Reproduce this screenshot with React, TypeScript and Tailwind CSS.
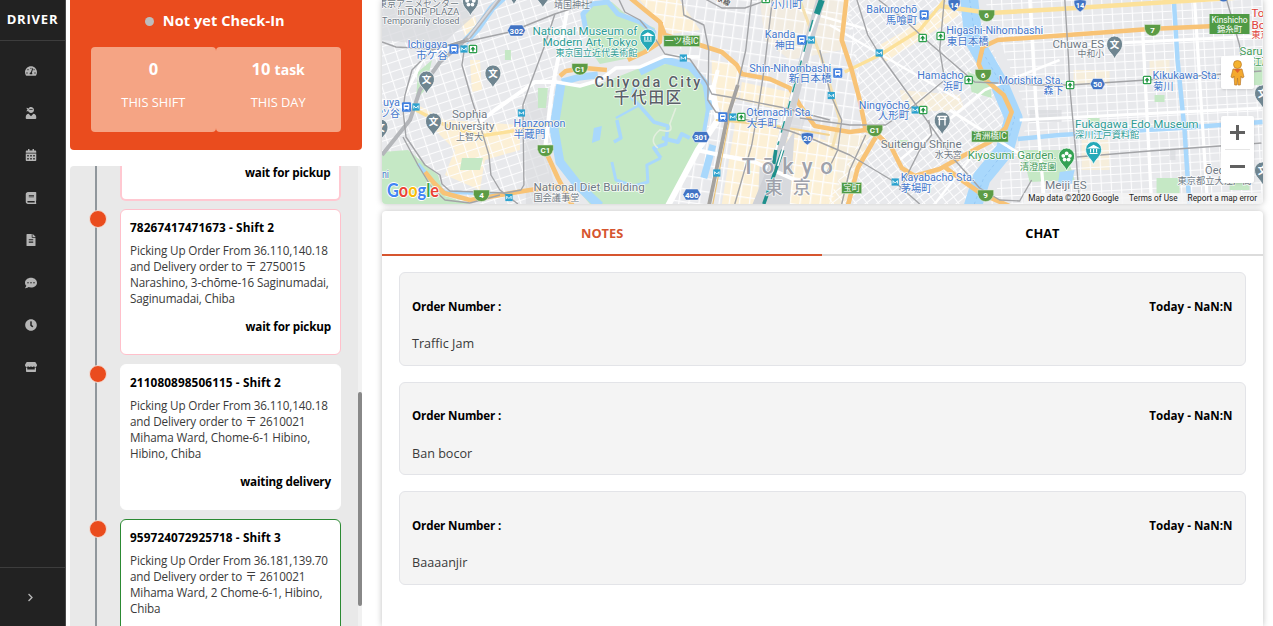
import React from "react";
import {
  FaTachometerAlt,
  FaUserNinja,
  FaCalendarAlt,
  FaBook,
  FaFileAlt,
  FaCommentDots,
  FaClock,
  FaStore,
  FaChevronRight,
} from "react-icons/fa";

const BLUE = "#4478cc";
const TEAL = "#2f9c96";
const GRAY = "#707a85";
const GREEN = "#439c5a";

type LabelRow = [text: string, x: number, baseline: number, width: number, size: number, color: string];

const labels: LabelRow[] = [
  ["東京アニメセンター", 378, 7, 81, 9.5, GRAY],
  ["in DNP PLAZA", 397.5, 15.5, 62, 9.5, GRAY],
  ["Temporarily closed", 382, 24.5, 77.5, 9.5, GRAY],
  ["Ichigaya", 407.5, 48.5, 40, 10.5, BLUE],
  ["市ケ谷", 416, 59, 32, 10.5, BLUE],
  ["靖国神社", 554, 8, 36, 9.5, GRAY],
  ["National Museum of", 532.5, 35, 105, 11, TEAL],
  ["Modern Art, Tokyo", 542.5, 46.5, 95, 11, TEAL],
  ["東京国立近代美術館", 555.5, 56.5, 82, 9.2, TEAL],
  ["Sophia", 452, 118.5, 35.5, 10.5, GRAY],
  ["University", 444, 130.5, 50.5, 10.5, GRAY],
  ["上智大", 456, 140, 27, 9.2, GRAY],
  ["Hanzomon", 513.5, 127.5, 52, 10.5, BLUE],
  ["半蔵門", 513.5, 138.5, 32, 10.5, BLUE],
  ["uya", 383, 106, 17, 10.5, BLUE],
  ["ツ谷", 380, 117, 20, 10.5, BLUE],
  ["ni", 382, 178, 7, 10.5, BLUE],
  ["National Diet Building", 533.5, 191.5, 111.5, 10.5, GRAY],
  ["国会議事堂", 533.5, 201.5, 46, 9.2, GRAY],
  ["小川町", 771, 8, 32, 10.5, BLUE],
  ["Kanda", 765, 38.5, 30.5, 10.5, BLUE],
  ["神田", 775, 49, 20, 10.5, BLUE],
  ["Shin-Nihombashi", 749.5, 72, 82, 10.5, BLUE],
  ["新日本橋", 789, 82.5, 43, 10.5, BLUE],
  ["Otemachi Sta.", 746.5, 116, 67, 10.5, BLUE],
  ["大手町", 747, 127, 31, 10.5, BLUE],
  ["Bakurochō", 866.5, 13, 51, 10.5, BLUE],
  ["馬喰町", 886, 24, 31.5, 10.5, BLUE],
  ["Higashi-Nihombashi", 946.5, 34, 97, 10.5, BLUE],
  ["東日本橋", 947, 45, 42, 10.5, BLUE],
  ["Hamacho", 917.5, 79.5, 46.5, 10.5, BLUE],
  ["浜町", 943, 90, 20.5, 10.5, BLUE],
  ["Morishita Sta.", 999, 84, 64.5, 10.5, BLUE],
  ["森下", 1044, 94.5, 20, 10.5, BLUE],
  ["Ningyōchō", 859, 109, 51, 10.5, BLUE],
  ["人形町", 878, 119.5, 31.5, 10.5, BLUE],
  ["Suitengu Shrine", 881, 148, 81, 10.5, GRAY],
  ["水天宮", 935, 158, 27, 9.2, GRAY],
  ["Kiyosumi Garden.", 968, 159.5, 89, 10.5, GREEN],
  ["清澄庭園", 1020, 170, 37, 9.2, GREEN],
  ["Kayabachō Sta.", 901, 181, 74, 10.5, BLUE],
  ["茅場町", 901, 192, 31, 10.5, BLUE],
  ["Chuwa ES", 1053, 48, 51.5, 10.5, GRAY],
  ["中和小", 1078, 57.5, 26.5, 9.2, GRAY],
  ["Kikukawa Sta.", 1153, 79, 67, 10.5, BLUE],
  ["菊川", 1153.5, 90, 20.5, 10.5, BLUE],
  ["Fukagawa Edo Museum", 1075.5, 128.5, 123.5, 11, TEAL],
  ["深川江戸資料館", 1075.5, 138.5, 64, 9.2, TEAL],
  ["Meiji ES", 1045.5, 189, 41.5, 10.5, GRAY],
  ["Ōedo", 1205.5, 174.5, 26, 10.5, GRAY],
  ["東京都立大江戸高", 1178, 184, 74, 9.2, GRAY],
  ["To", 1252, 17, 13, 11, "#e0413b"],
  ["Bo", 1252, 29, 14, 11, "#e0413b"],
  ["東京", 1252, 38.5, 18, 9.2, "#e0413b"],
  ["Saru", 1240, 55, 23, 11, GREEN],
  ["江戸", 1253, 65, 18, 9.2, GREEN],
];

function MapLabels() {
  return (
    <g
      fontFamily='Roboto, "Noto Sans CJK JP", sans-serif'
      stroke="#ffffff"
      strokeOpacity="0.85"
      strokeWidth="1.6"
      strokeLinejoin="round"
      paintOrder="stroke"
    >
      {labels.map(([text, x, y, w, size, color]) => (
        <text key={text + x} x={x} y={y} fontSize={size} fill={color} textLength={w} lengthAdjust="spacingAndGlyphs">
          {text}
        </text>
      ))}
      <g fontWeight="500">
        <text x="594.5" y="87.5" fontSize="14.5" fill="#5a6068" textLength="106">Chiyoda City</text>
        <text x="614" y="103" fontSize="15.5" fill="#5a6068" textLength="67.5">千代田区</text>
        <text x="742" y="174.5" fontSize="22" fill="#9fa2ab" textLength="91">Tōkyo</text>
        <text x="765" y="194" fontSize="18" fill="#9fa2ab" textLength="46">東京</text>
        <text x="711" y="-3" fontSize="7" fill="#444" transform="rotate(28 711 -3)" textLength="20">環状線</text>
      </g>
    </g>
  );
}

function Tag({ x, y, w, h = 11, children }: { x: number; y: number; w: number; h?: number; children: string }) {
  return (
    <g>
      <rect x={x} y={y} width={w} height={h} fill="#4f9a45" stroke="#cfe5c9" strokeWidth="0.6" />
      <text x={x + w / 2} y={y + h - 2.6} fontSize="8.6" fill="#fff" textAnchor="middle">{children}</text>
    </g>
  );
}

function Hex({ x, y, children }: { x: number; y: number; children: string }) {
  const w = children.length > 2 ? 9 : 7.5;
  return (
    <g transform={`translate(${x} ${y})`}>
      <path d={`M${-w} 0 L${-w + 3} -5.5 H${w - 3} L${w} 0 L${w - 3} 5.5 H${-w + 3}Z`} fill="#4173c4" stroke="#fff" strokeWidth="0.5" />
      <text y="3" fontSize="8" fontWeight="700" fill="#fff" textAnchor="middle">{children}</text>
    </g>
  );
}

function Shield({ x, y, children }: { x: number; y: number; children: string }) {
  return (
    <g transform={`translate(${x} ${y})`}>
      <path d="M-6 -5 Q0 -7 6 -5 Q7 2 0 6.5 Q-7 2 -6 -5Z" fill="#4173c4" stroke="#fff" strokeWidth="0.5" />
      <text y="2.5" fontSize="7.5" fontWeight="700" fill="#fff" textAnchor="middle">{children}</text>
    </g>
  );
}

function Express({ x, y, children }: { x: number; y: number; children: string }) {
  return (
    <g transform={`translate(${x} ${y})`}>
      <path d="M-8 -5.5 H8 V-1 Q6 6 0 6 Q-6 6 -8 -1Z" fill="#5c9b45" stroke="#e6f0e0" strokeWidth="0.5" />
      <text y="2.8" fontSize="8" fontWeight="700" fill="#fff" textAnchor="middle">{children}</text>
    </g>
  );
}

function Pin({ x, y, color = "#6f8590", kind = "school" }: { x: number; y: number; color?: string; kind?: "school" | "museum" | "shrine" | "flower" }) {
  return (
    <g transform={`translate(${x} ${y})`}>
      <path d="M0 14 C-2 8 -8 6 -8 -1 A8 8 0 0 1 8 -1 C8 6 2 8 0 14Z" fill={color} stroke="#fff" strokeWidth="0.8" />
      {kind === "school" && <text y="2.8" fontSize="9.5" fontWeight="700" fill="#fff" textAnchor="middle">文</text>}
      {kind === "museum" && <path d="M-4.5 -2.5 L0 -5 L4.5 -2.5Z M-4 3 H4 M-3 -1.5 V2 M0 -1.5 V2 M3 -1.5 V2" fill="#fff" stroke="#fff" strokeWidth="1.1" />}
      {kind === "shrine" && <path d="M-5 -4.5 H5 M-4 -1.8 H4 M-2.8 -4 V4.5 M2.8 -4 V4.5" stroke="#fff" strokeWidth="1.4" />}
      {kind === "flower" && (
        <g fill="#fff">
          <circle cx="0" cy="-3.6" r="1.9" /><circle cx="3.3" cy="-1.2" r="1.9" /><circle cx="2" cy="2.6" r="1.9" />
          <circle cx="-2" cy="2.6" r="1.9" /><circle cx="-3.3" cy="-1.2" r="1.9" /><circle cx="0" cy="0" r="1" fill={color} />
        </g>
      )}
    </g>
  );
}

const trains = [[454, 49], [406.5, 107], [723, 117], [802, 40], [924.5, 15], [838, 73]];
const metros = [[464, 49], [416, 107], [521.5, 113], [509, 197.5], [683.5, 58], [733, 117], [717, 173], [811.5, 40], [879.5, 53], [831.5, 95.5], [915.5, 110], [895.5, 182]];
const toei = [[473, 49], [741.5, 117], [766, -1], [923, 38], [941, 36], [923.5, 110], [969, 80], [1070.5, 85], [1147.5, 80]];

const greys = [
  "M382 42 L396 47 L432 49 L460 43 L510 32 L555 14 L592 2",
  "M555 14 L545 45 L530 85 L523 105 L524 185 L521 190 L505 193 L450 191 L442 184 L440 175 L425 165 L406 137 L403 110 L405 95 L412 70 L432 50 L465 40",
  "M465 45 L462 65 L472 100 L480 125 L489 155 L491 175 L500 190 L518 204",
  "M403 137 L418 165 L432 188 L445 200 L470 203 L500 195",
  "M617 -5 L625 12 L640 20 L655 38 L665 54 L690 59 L706 82 L712 94 L735 98 L785 108 L830 120",
  "M682 -4 L684 15 L704 25 L709 50 L708 100 L716 112 L740 118 L790 131 L815 140 L850 155 L895 182 L920 204",
  "M700 -4 L722 8 L745 8 L768 0",
  "M752 -4 L746 50 L738 85 L727 120",
  "M773 -4 L765 65 L759 105 L752 145 L735 204",
  "M856 -4 L868 35 L879 53 L915 103 L955 160 L980 188 L1000 200 L1020 201 L1032 180",
  "M879 0 L905 20 L924 38 L975 82 L1040 85 L1070 85 L1147 80 L1262 71",
  "M945 -4 L940 50 L945 80 L915 105 L886 125 L850 125 L800 118",
  "M1065 -4 L1069 60 L1070 85 L1076 150 L1080 204",
  "M929 120 L932 135 L920 150 L900 190",
  "M820 50 L831 95 L842 120 L838 150 L826 175",
  "M866 135 L850 170 L842 204",
  "M1077 157 L1150 151 L1262 143",
  "M1226 -4 L1240 45 L1242 60",
];

const highways = [
  "M628 -4 L645 10 L660 22 L665 35 L700 45 L722 52 L737 65 L742 74 L770 79 L790 88 L800 105 L815 126 L832 129 L850 132 L866 130 L878 135 L892 148 L902 168 L915 176 L940 169 L965 155 L990 142 L1006 128 L1012 112 L1004 95 L986 80 L979 64 L983 47 L998 40 L1040 37 L1110 32 L1150 29 L1216 26",
  "M661 22 L660 42 L645 52 L628 60",
  "M607 70 L585 68 L566 71 L560 76",
  "M847 -4 L842 40 L852 70 L860 100 L866 130",
  "M876 137 L858 168 L848 206",
  "M945 167 L962 180 L982 194 L1010 206",
  "M548 156 L558 178 L574 208",
  "M425 172 L434 183 L444 193 L470 200 L530 190 L560 186",
];

function CityMap() {
  return (
    <svg className="block h-[204px] w-full" viewBox="382 0 881 204" preserveAspectRatio="none">
      <defs>
        <pattern id="gridA" width="12" height="9" patternUnits="userSpaceOnUse" patternTransform="rotate(-18)">
          <path d="M0 0 H12 M0 0 V9" stroke="#fdfdfe" strokeWidth="2.2" />
        </pattern>
        <pattern id="gridB" width="10" height="13" patternUnits="userSpaceOnUse" patternTransform="rotate(8)">
          <path d="M0 0 H10 M0 0 V13" stroke="#fdfdfe" strokeWidth="2.6" />
        </pattern>
        <pattern id="gridC" width="9" height="7" patternUnits="userSpaceOnUse" patternTransform="rotate(-38)">
          <path d="M0 0 H9 M0 0 V7" stroke="#fdfdfe" strokeWidth="2" />
        </pattern>
        <pattern id="gridD" width="10" height="8" patternUnits="userSpaceOnUse" patternTransform="rotate(-3)">
          <path d="M0 0 H10 M0 0 V8" stroke="#fdfdfe" strokeWidth="2.2" />
        </pattern>
      </defs>

      <rect x="382" y="0" width="881" height="204" fill="#e8e9ec" />

      <g fill="#fcf0d6">
        <path d="M418 105 L445 120 L520 125 L520 150 L485 160 L480 190 L445 175 L455 150 L430 125Z" />
        <path d="M712 60 L738 65 L740 95 L725 115 L770 122 L840 145 L835 204 L722 204 L735 125 L712 100Z" />
        <path d="M640 0 L680 0 L700 30 L670 34Z" />
        <path d="M742 82 L790 92 L800 115 L740 100Z" />
        <path d="M760 0 H850 L842 50 L790 60 L765 40Z" opacity="0.5" />
        <path d="M880 45 L950 5 L960 15 L885 62Z" />
        <path d="M470 60 H480 L482 90 L472 92Z M460 20 L475 15 L478 32 L465 36Z" />
        <path d="M826 130 L870 135 L845 204 H826Z" opacity="0.7" />
        <path d="M900 90 L960 95 L965 110 L905 112Z" opacity="0.7" />
        <path d="M1074 70 H1110 V85 H1074Z M1082 140 H1110 V170 H1082Z M1150 60 H1170 V75 H1150Z" opacity="0.7" />
      </g>

      <path d="M382 0 H610 L560 80 L545 204 H382Z" fill="url(#gridA)" />
      <path d="M640 0 H850 L866 130 L830 204 H650 L715 90Z" fill="url(#gridB)" />
      <path d="M845 0 H975 L1018 115 L975 204 H826 L866 130Z" fill="url(#gridC)" />
      <path d="M985 0 H1263 V204 H990 L1030 120Z" fill="url(#gridD)" />

      <g fill="#d8dade">
        <path d="M382 0 H460 L475 15 L440 46 L382 40Z" opacity="0.75" />
        <path d="M525 95 L550 90 L545 150 L560 204 H526Z" opacity="0.6" />
        <path d="M760 165 L775 160 L795 130 L790 204 H758Z" />
        <path d="M1030 110 H1062 V122 H1030Z M1170 150 H1176 V160 H1170Z M785 115 L805 120 L802 130 L783 126Z" opacity="0.7" />
      </g>

      <g fill="#c5e8c5">
        <path d="M382 152 L408 150 L438 175 L445 196 L470 204 H382Z" />
        <path d="M462 158 H483 L480 170 H460Z M505 50 H511 V60 H505Z M538 88 H548 L546 108 H538Z" />
        <path d="M584 4 L612 2 L630 18 L655 28 L656 45 L640 56 L600 64 L590 50Z" />
        <path d="M560 84 L600 84 L640 68 L680 62 L700 72 L712 100 L703 140 L667 204 H590 L565 175 L553 130 L559 95Z" />
        <path d="M968 72 L990 80 L992 98 L972 92Z M1022 150 H1066 L1075 180 L1030 182Z M1157 178 H1180 V194 H1157Z" />
        <path d="M898 140 H908 V148 H898Z M1240 60 H1263 V85 H1240Z M1088 118 H1100 V124 H1088Z M1155 95 H1165 V102 H1155Z M1230 170 H1250 V190 H1230Z" />
        <path d="M418 72 L432 60 L425 90 L416 100Z" />
      </g>

      <g fill="none" stroke="#a9d8fc" strokeLinejoin="round">
        <path d="M505 -4 L492 8 L478 28 L465 42" strokeWidth="7" />
        <path d="M418 164 L434 183 L445 192 L500 194" strokeWidth="3.5" />
        <path d="M586 30 L583 14 L592 4 L608 2 L618 14 L640 22 L654 32 L653 44" strokeWidth="5" />
        <path d="M562 82 L580 77 L598 75" strokeWidth="7" />
        <path d="M561 84 L554 128 L560 162 L578 185 L600 206" strokeWidth="9" />
        <path d="M640 72 L665 60 L690 66 L706 84 L711 110" strokeWidth="7" />
        <path d="M662 138 L678 142 L682 134 L690 138" strokeWidth="4" />
        <path d="M636 84 L632 98 L640 106 L654 122 L668 126 L666 144 L654 148 L661 158" strokeWidth="3.5" />
        <path d="M638 106 L616 118" strokeWidth="2.2" />
        <path d="M617 120 L621 138 L614 142" strokeWidth="3.5" />
        <path d="M661 158 L647 165 L648 182 L634 186 L616 180 L612 162" strokeWidth="3" />
        <path d="M713 145 L704 178" strokeWidth="7" />
        <path d="M706 90 L708 110 L701 150" strokeWidth="4" />
        <path d="M969 -5 L974 40 L1000 85 L1014 118 L1005 150 L982 178 L972 210" strokeWidth="18" />
        <path d="M1018 139 L1060 135 L1180 128 L1263 122" strokeWidth="4.5" />
        <path d="M1174 -4 L1178 60 L1185 130 L1190 208" strokeWidth="4.5" />
      </g>
      <path d="M594 128 L602 126 L600 140 L592 143Z M1060 172 L1075 170 L1072 184 L1058 186Z" fill="#a9d8fc" />
      <path d="M970 0 L976 40 L1002 85 L1015 118 L1006 150 L984 178 L974 206" fill="none" stroke="#8cc1f0" strokeWidth="0.7" strokeDasharray="3 3" />

      <g fill="none" stroke="#fff" strokeLinejoin="round">
        <path d="M556 82 L580 86 L600 80 L616 68 L640 67 L665 56 L700 57" strokeWidth="3.5" />
        <path d="M569 0 L562 40 L552 90 L545 150" strokeWidth="4" />
        <path d="M697 150 L720 155 L755 162 L800 182" strokeWidth="4" />
        <path d="M712 85 L718 120 L698 150 L668 206" strokeWidth="6" />
        <path d="M710 100 L718 70" strokeWidth="4" />
        <path d="M382 100 L405 108 M405 95 L425 55 L470 40" strokeWidth="3" />
        <path d="M470 130 L495 110 L535 82 L556 82" strokeWidth="4" />
        <path d="M1030 -2 L1036 100 L1045 204 M1195 0 L1208 204 M1143 30 L1152 204 M1020 120 L1262 108 M1075 45 L1262 36" strokeWidth="3.2" />
        <path d="M900 160 L985 90 L1060 60" strokeWidth="2.6" />
        <path d="M935 204 L985 140 M830 25 L960 100 M800 10 L870 30" strokeWidth="2.4" />
        <path d="M950 110 L1030 160" strokeWidth="3" />
      </g>
      <path d="M676 108 L670 124 Q675 134 660 130 Q648 140 658 148" fill="none" stroke="#e3efdf" strokeWidth="1.6" />

      <g fill="none" stroke="#fce19a" strokeLinejoin="round">
        <path d="M416 110 L445 125 L480 136 L520 130 L556 122" strokeWidth="3.5" />
        <path d="M940 6 L990 13 L1060 9 L1263 -4" strokeWidth="4.5" />
        <path d="M845 72 L880 55 L920 30 L945 0" strokeWidth="3.5" />
        <path d="M716 120 L770 125 L830 135" strokeWidth="2.2" stroke="#f3d391" />
        <path d="M800 0 L826 70 L840 120 L832 150" strokeWidth="3" stroke="#f5e1b2" />
        <path d="M545 150 L556 174 L572 206" strokeWidth="4" />
      </g>

      <g fill="none" stroke="#f8c376" strokeWidth="4.6" strokeLinejoin="round">
        {highways.map((d) => <path key={d} d={d} />)}
      </g>

      <g fill="none" strokeLinejoin="round">
        <path d="M502 -4 L487 14 L470 36 L440 62 L420 90 L410 120 L382 155" stroke="#b4b6ba" strokeWidth="4" />
        <path d="M500 -4 L485 16 L468 38" stroke="#d9dadf" strokeWidth="2" />
        <path d="M822 -4 L808 45 L795 95 L778 155 L756 208" stroke="#cfd1d6" strokeWidth="9" />
        <path d="M824 -4 L806 45 L792 95 L776 150" stroke="#fff" strokeWidth="2.2" />
        <path d="M822 0 L817 14" stroke="#1f908c" strokeWidth="6" />
        <path d="M813 20 L792 95 L778 145" stroke="#2b9a95" strokeWidth="1.5" strokeDasharray="12 9" />
        <path d="M776 150 L774 164 M783 150 L764 204" stroke="#1f908c" strokeWidth="3.5" />
        <path d="M784 146 L778 166" stroke="#fff" strokeWidth="1.6" />
        <path d="M738 85 L727 120 L709 206" stroke="#a5a29e" strokeWidth="3.8" />
        <path d="M713 204 L731 112" stroke="#ebc47a" strokeWidth="1.2" />
      </g>
      <g fill="none" stroke="#a3a4a7" strokeWidth="1.4" strokeLinejoin="round">
        {greys.map((d) => <path key={d} d={d} />)}
      </g>

      <g fontFamily='Roboto, "Noto Sans CJK JP", sans-serif'>
        {trains.map(([x, y]) => (
          <g key={`${x}-${y}`} transform={`translate(${x} ${y})`}>
            <rect x="-4.5" y="-4.8" width="9" height="9.6" rx="1" fill="#3f7fe0" />
            <rect x="-2.8" y="-3" width="5.6" height="5" rx="0.8" fill="#fff" />
            <path d="M-1.8 -1.4 H1.8 V0 H-1.8Z" fill="#3f7fe0" />
            <path d="M-2.5 3.4 L-1.2 2 M2.5 3.4 L1.2 2" stroke="#fff" strokeWidth="0.8" />
          </g>
        ))}
        {metros.map(([x, y]) => (
          <g key={`${x}-${y}`} transform={`translate(${x} ${y})`}>
            <rect x="-3.6" y="-3.6" width="7.2" height="7.2" fill="#2da3cf" />
            <path d="M-2.2 1.5 V-1.3 L0 1 L2.2 -1.3 V1.5" fill="none" stroke="#fff" strokeWidth="0.9" />
          </g>
        ))}
        {toei.map(([x, y]) => (
          <g key={`${x}-${y}`} transform={`translate(${x} ${y})`}>
            <rect x="-3.7" y="-3.7" width="7.4" height="7.4" rx="1" fill="#fff" stroke="#2ea04d" strokeWidth="1.2" />
            <path d="M0 -2.6 L2.6 0.5 H0.8 V2.4 H-0.8 V0.5 H-2.6Z" fill="#1e9440" />
          </g>
        ))}
        <Hex x={516.5} y={30.5}>302</Hex>
        <Hex x={701} y={137}>301</Hex>
        <Hex x={692} y={194.5}>406</Hex>
        <Hex x={1098} y={84}>50</Hex>
        <Shield x={807.5} y={138.5}>20</Shield>
        <Shield x={954.5} y={5}>14</Shield>
        <Shield x={1080.5} y={5.5}>14</Shield>
        <path d="M1220 0 H1228 Q1224 3 1220 0Z" fill="#4173c4" />
        <Express x={580} y={69}>C1</Express>
        <Express x={545.5} y={150.5}>C1</Express>
        <Express x={481.5} y={195.5}>4</Express>
        <Express x={987} y={15.5}>6</Express>
        <Express x={983.5} y={75}>6</Express>
        <Express x={875} y={130.5}>C1</Express>
        <Express x={986} y={195.5}>9</Express>
        <Express x={1153} y={30}>7</Express>
        <Pin x={426.5} y={80} />
        <Pin x={493} y={74} />
        <Pin x={433.5} y={122} />
        <Pin x={380} y={128} />
        <Pin x={470.5} y={2} kind="flower" />
        <Pin x={514} y={-9} />
        <Pin x={543} y={-6} />
        <Pin x={1115} y={45} />
        <Pin x={1263} y={94} />
        <Pin x={1263} y={171} />
        <Pin x={648} y={38} color="#25a9b8" kind="museum" />
        <Pin x={1094} y={150.5} color="#25a9b8" kind="museum" />
        <Pin x={1067} y={157} color="#34a253" kind="flower" />
        <Pin x={942.5} y={121} kind="shrine" />
        <MapLabels />
        <Tag x={664} y={35.5} w={36}>一ツ橋IC</Tag>
        <Tag x={972} y={131} w={36.5}>清洲橋IC</Tag>
        <Tag x={842} y={182.5} w={20}>宝町</Tag>
        <rect x="1210" y="14" width="40" height="20" fill="#4f9a45" />
        <text x="1230" y="22.8" fontSize="8.4" fill="#fff" textAnchor="middle" textLength="36">Kinshicho</text>
        <text x="1230" y="31.8" fontSize="8.4" fill="#fff" textAnchor="middle">錦糸町</text>

        <text x="387" y="197.5" fontFamily="Lato, sans-serif" fontSize="18.5" fontWeight="700" textLength="52" lengthAdjust="spacingAndGlyphs" stroke="#fff" strokeWidth="1.8" paintOrder="stroke">
          <tspan fill="#4285f4">G</tspan><tspan fill="#ea4335">o</tspan><tspan fill="#fbbc05">o</tspan><tspan fill="#4285f4">g</tspan><tspan fill="#34a853">l</tspan><tspan fill="#ea4335">e</tspan>
        </text>

        <rect x="1024" y="193" width="239" height="11" fill="#f5f5f5" opacity="0.8" />
        <g fontSize="8.4" fill="#222">
          <text x="1028.5" y="201" textLength="90.5" lengthAdjust="spacingAndGlyphs">Map data ©2020 Google</text>
          <text x="1129.5" y="201" textLength="48.5" lengthAdjust="spacingAndGlyphs">Terms of Use</text>
          <text x="1188" y="201" textLength="69.5" lengthAdjust="spacingAndGlyphs">Report a map error</text>
        </g>
      </g>
    </svg>
  );
}

function MapPanel() {
  return (
    <section className="relative h-[204px] shrink-0 overflow-hidden rounded-b shadow-[0_0_6px_rgba(0,0,0,0.25)]">
      <CityMap />
      <div className="absolute top-[56px] right-[9px] flex h-[33px] w-[33px] items-center justify-center rounded-xs bg-white shadow">
        <svg className="h-[26px] w-[15px]" viewBox="0 0 15 26">
          <circle cx="7.5" cy="4.5" r="4" fill="#f4b22e" stroke="#b97a2c" strokeWidth="0.7" />
          <path d="M3 9 H12 L14 17 L12 18 L11 16 L10.3 25 H8 L7.5 18 L7 25 H4.7 L4 16 L3 18 L1 17Z" fill="#f4a92e" stroke="#b97a2c" strokeWidth="0.7" />
          <path d="M4 9 H11 L7.5 13Z" fill="#e0642e" />
        </svg>
      </div>
      <div className="absolute top-[116px] right-[9px] flex h-[67px] w-[33px] flex-col rounded-xs bg-white shadow">
        <div className="flex flex-1 items-center justify-center">
          <svg className="size-[15px]" viewBox="0 0 15 15"><path d="M0 7.5 H15 M7.5 0 V15" stroke="#606060" strokeWidth="3" /></svg>
        </div>
        <div className="mx-1 h-px bg-[#e6e6e6]" />
        <div className="flex flex-1 items-center justify-center">
          <svg className="size-[15px]" viewBox="0 0 15 15"><path d="M0 7.5 H15" stroke="#606060" strokeWidth="3" /></svg>
        </div>
      </div>
    </section>
  );
}

const navIcons = [FaTachometerAlt, FaUserNinja, FaCalendarAlt, FaBook, FaFileAlt, FaCommentDots, FaClock, FaStore];

function Sidebar() {
  return (
    <aside className="flex w-[66px] shrink-0 flex-col border-r border-[#4a4a4a] bg-[#222222] text-[#b5b5b5]">
      <div className="flex h-[41px] items-center justify-center border-b border-[#3d3d3d] text-[13px] font-bold tracking-[0.8px] text-white">DRIVER</div>
      <nav className="flex flex-1 flex-col pt-[8.5px] pr-[4px]">
        {navIcons.map((Icon, i) => (
          <span key={i} className="flex h-[42.4px] items-center justify-center">
            <Icon className="size-3" />
          </span>
        ))}
      </nav>
      <div className="flex h-[59px] items-center justify-center border-t border-[#3d3d3d] pr-[5px]">
        <FaChevronRight className="size-[9px]" />
      </div>
    </aside>
  );
}

const tasks = [
  {
    title: "78267417471673 - Shift 2",
    lines: ["Picking Up Order From 36.110,140.18", "and Delivery order to 〒 2750015", "Narashino, 3-chōme-16 Saginumadai,", "Saginumadai, Chiba"],
    status: "wait for pickup",
    border: "border-[#ffc0cb]",
  },
  {
    title: "211080898506115 - Shift 2",
    lines: ["Picking Up Order From 36.110,140.18", "and Delivery order to 〒 2610021", "Mihama Ward, Chome-6-1 Hibino,", "Hibino, Chiba"],
    status: "waiting delivery",
    border: "border-white",
  },
  {
    title: "959724072925718 - Shift 3",
    lines: ["Picking Up Order From 36.181,139.70", "and Delivery order to 〒 2610021", "Mihama Ward, 2 Chome-6-1, Hibino,", "Chiba"],
    status: "",
    border: "border-[#2c8a33]",
  },
];

function TaskList() {
  return (
    <div className="relative mt-4 h-[460px] overflow-hidden rounded-t bg-[#e9e9e9]">
      <div className="absolute top-0 left-[25px] h-full w-[1.5px] bg-[#90979c]" />
      <div className="flex flex-col gap-[8.7px] pr-[20.5px] pl-[50px]">
        <div className="h-[34.6px] rounded-b-md border-2 border-t-0 border-[#ffc8d1] bg-white pr-[8.5px] text-right text-[11.7px] leading-[12px] font-bold tracking-[-0.17px] text-black">
          wait for pickup
        </div>
        {tasks.map((t) => (
          <article key={t.title} className={`relative h-[146px] shrink-0 rounded-md border-[1.5px] bg-white px-[9px] pt-[9px] ${t.border}`}>
            <span className="absolute top-0 -left-[32px] size-[18px] rounded-full border border-[#f3ded6] bg-[#ea4c1e]" />
            <h3 className="text-[11.8px] leading-4 font-bold tracking-[0.1px] whitespace-nowrap text-black">{t.title}</h3>
            <div className="mt-[7px] text-[11.7px] leading-4 tracking-[-0.15px] whitespace-nowrap text-[#3a3a3a]">
              {t.lines.map((l) => <p key={l}>{l}</p>)}
            </div>
            <p className="mt-3 text-right text-[11.7px] leading-4 font-bold tracking-[-0.17px] text-black">{t.status}</p>
          </article>
        ))}
      </div>
      <div className="absolute top-0 right-0 h-full w-1 bg-[#f1f1f1]">
        <div className="mt-[226px] h-[214px] rounded-sm bg-[#888888]" />
      </div>
    </div>
  );
}

function Summary() {
  return (
    <div className="flex h-[150px] flex-col rounded-b bg-[#ea4c1e] px-[21px] text-white">
      <div className="flex h-[47px] items-center justify-center gap-[9px] pr-0.5 pb-[5px]">
        <span className="size-[9px] rounded-full bg-[#bdbdbd]" />
        <span className="text-[14.5px] font-bold tracking-[0.08px]">Not yet Check-In</span>
      </div>
      <div className="grid h-[85px] grid-cols-2 text-center">
        <div className="rounded bg-[#f5a484] pt-[10.5px]">
          <p className="h-[22px] text-[16.5px] leading-[22px] font-bold">0</p>
          <p className="mt-3 text-[12.8px] leading-5">THIS SHIFT</p>
        </div>
        <div className="rounded bg-[#f5a484] pt-[10.5px]">
          <p className="h-[22px] text-[16.5px] leading-[22px] font-bold">10 <span className="text-[14px]">task</span></p>
          <p className="mt-3 text-[12.8px] leading-5">THIS DAY</p>
        </div>
      </div>
    </div>
  );
}

const notes = ["Traffic Jam", "Ban bocor", "Baaaanjir"];

function NotesPanel() {
  return (
    <section className="mt-[7px] flex flex-1 flex-col rounded-t bg-white shadow-[0_0_6px_rgba(0,0,0,0.25)]">
      <div className="grid h-[45px] grid-cols-2 text-center text-[12.8px] font-bold">
        <div className="h-[45px] border-b-2 border-[#d6552f] leading-[44px] text-[#d6552f]">NOTES</div>
        <div className="h-[45px] border-b-2 border-[#dcdcdc] leading-[44px] text-black">CHAT</div>
      </div>
      <div className="flex flex-col gap-4 px-[17px] pt-4">
        {notes.map((n) => (
          <article key={n} className="h-[93.6px] rounded-md border border-[#e3e4e8] bg-[#f4f4f4] px-[12px] pt-[25.6px]">
            <div className="flex justify-between text-[11.6px] leading-4 font-bold text-black">
              <span className="tracking-[-0.14px]">Order Number :</span>
              <span>Today - NaN:N</span>
            </div>
            <p className="mt-[21.6px] text-[12.6px] leading-4 text-[#3a3a3a]">{n}</p>
          </article>
        ))}
      </div>
    </section>
  );
}

export default function App() {
  return (
    <div className='flex h-[626px] w-[1273px] overflow-hidden bg-white font-["Open_Sans","Noto_Sans","Noto_Sans_CJK_JP",sans-serif]'>
      <Sidebar />
      <div className="ml-1 w-[291.5px] shrink-0">
        <Summary />
        <TaskList />
      </div>
      <main className="ml-[20.5px] flex w-[880.5px] shrink-0 flex-col">
        <MapPanel />
        <NotesPanel />
      </main>
    </div>
  );
}
